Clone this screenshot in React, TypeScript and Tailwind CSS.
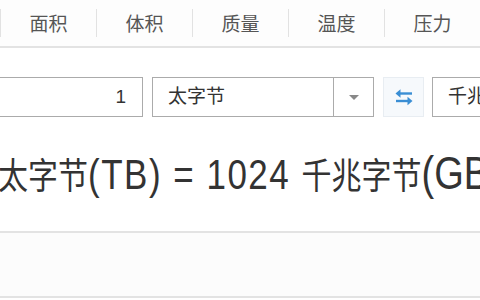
const tabs = ["面积", "体积", "质量", "温度", "压力"];

function SwapIcon() {
  return (
    <svg width="22" height="22" viewBox="0 0 22 22" fill="none">
      <path d="M5 7.5h14" stroke="#3a8ed4" strokeWidth="2.4" />
      <path d="M2.5 7.5l5-4.2v8.4z" fill="#3a8ed4" />
      <path d="M3 15h14" stroke="#3a8ed4" strokeWidth="2.4" />
      <path d="M19.5 15l-5-4.2v8.4z" fill="#3a8ed4" />
    </svg>
  );
}

export default function App() {
  return (
    <div className="w-[480px] h-[300px] overflow-hidden bg-white font-['Liberation_Sans','Noto_Sans_CJK_SC',sans-serif]">
      <div className="h-[48px] flex items-center bg-[#fdfdfd] border-b-2 border-[#e3e3e3]">
        <div className="w-[7px] h-[28px]" />
        {tabs.map((t) => (
          <div key={t} className="flex items-center">
            <div className="w-px h-[28px] bg-[#e2e2e2]" />
            <div className="w-[95px] pt-[3px] text-center text-[19px] text-[#555] leading-none">{t}</div>
          </div>
        ))}
      </div>

      <div className="mt-[29px] flex h-[40px]">
        <div className="w-[143px] shrink-0 border border-l-0 border-[#ababab] flex items-center justify-end pr-[16px] text-[19px] text-[#333]">
          1
        </div>
        <div className="ml-[9px] w-[222px] shrink-0 border border-[#ababab] flex">
          <div className="flex-1 flex items-center pl-[15px] text-[19px] text-[#333]">太字节</div>
          <div className="w-[40px] border-l border-[#ababab] flex items-center justify-center">
            <div className="w-0 h-0 border-l-[5px] border-r-[5px] border-t-[5px] border-l-transparent border-r-transparent border-t-[#888]" />
          </div>
        </div>
        <div className="ml-[9px] w-[41px] shrink-0 border border-[#e8edf2] bg-[#f6f9fc] flex items-center justify-center">
          <SwapIcon />
        </div>
        <div className="ml-[8px] flex-1 border border-r-0 border-[#ababab] flex items-center pl-[15px] text-[19px] text-[#333] whitespace-nowrap overflow-hidden">
          千兆字节
        </div>
      </div>

      <div className="mt-[36px] h-[40px] -ml-[2px] whitespace-nowrap text-[30px] leading-[40px] text-[#333] scale-y-[1.2] origin-center">
        太字节<span className="text-[35px] tracking-[1.5px]">(TB) = 1024 </span>千兆字节<span className="text-[38px]">(GB)</span>
      </div>

      <div className="mt-[38px] h-[67px] border-t-2 border-b-2 border-[#e3e3e3] bg-[#fcfcfc]" />
    </div>
  );
}
